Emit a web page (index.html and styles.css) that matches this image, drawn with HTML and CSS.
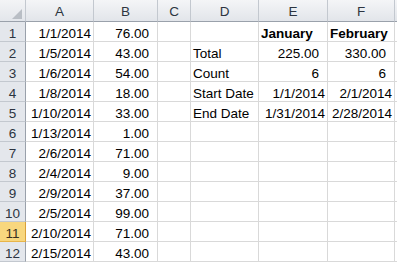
FILE: index.html
```html
<!DOCTYPE html>
<html>
<head>
<meta charset="utf-8">
<link rel="stylesheet" href="styles.css">
</head>
<body>
<div class="sheet">
  <div class="corner"><span class="corner-tri"></span></div>
  <div class="colhead">A</div>
  <div class="colhead">B</div>
  <div class="colhead">C</div>
  <div class="colhead">D</div>
  <div class="colhead">E</div>
  <div class="colhead">F</div>
  <div class="colhead last"></div>

  <div class="rowhead">1</div>
  <div class="cell num">1/1/2014</div><div class="cell amt">76.00</div><div class="cell"></div>
  <div class="cell"></div><div class="cell txt bold">January</div><div class="cell txt bold">February</div><div class="cell last"></div>

  <div class="rowhead">2</div>
  <div class="cell num">1/5/2014</div><div class="cell amt">43.00</div><div class="cell"></div>
  <div class="cell txt">Total</div><div class="cell amt">225.00</div><div class="cell amt">330.00</div><div class="cell last"></div>

  <div class="rowhead">3</div>
  <div class="cell num">1/6/2014</div><div class="cell amt">54.00</div><div class="cell"></div>
  <div class="cell txt">Count</div><div class="cell amt">6</div><div class="cell amt">6</div><div class="cell last"></div>

  <div class="rowhead">4</div>
  <div class="cell num">1/8/2014</div><div class="cell amt">18.00</div><div class="cell"></div>
  <div class="cell txt">Start Date</div><div class="cell num">1/1/2014</div><div class="cell num">2/1/2014</div><div class="cell last"></div>

  <div class="rowhead">5</div>
  <div class="cell num">1/10/2014</div><div class="cell amt">33.00</div><div class="cell"></div>
  <div class="cell txt">End Date</div><div class="cell num">1/31/2014</div><div class="cell num">2/28/2014</div><div class="cell last"></div>

  <div class="rowhead">6</div>
  <div class="cell num">1/13/2014</div><div class="cell amt">1.00</div><div class="cell"></div>
  <div class="cell"></div><div class="cell"></div><div class="cell"></div><div class="cell last"></div>

  <div class="rowhead">7</div>
  <div class="cell num">2/6/2014</div><div class="cell amt">71.00</div><div class="cell"></div>
  <div class="cell"></div><div class="cell"></div><div class="cell"></div><div class="cell last"></div>

  <div class="rowhead">8</div>
  <div class="cell num">2/4/2014</div><div class="cell amt">9.00</div><div class="cell"></div>
  <div class="cell"></div><div class="cell"></div><div class="cell"></div><div class="cell last"></div>

  <div class="rowhead">9</div>
  <div class="cell num">2/9/2014</div><div class="cell amt">37.00</div><div class="cell"></div>
  <div class="cell"></div><div class="cell"></div><div class="cell"></div><div class="cell last"></div>

  <div class="rowhead">10</div>
  <div class="cell num">2/5/2014</div><div class="cell amt">99.00</div><div class="cell"></div>
  <div class="cell"></div><div class="cell"></div><div class="cell"></div><div class="cell last"></div>

  <div class="rowhead active">11</div>
  <div class="cell num">2/10/2014</div><div class="cell amt">71.00</div><div class="cell"></div>
  <div class="cell"></div><div class="cell"></div><div class="cell"></div><div class="cell last"></div>

  <div class="rowhead">12</div>
  <div class="cell num">2/15/2014</div><div class="cell amt">43.00</div><div class="cell"></div>
  <div class="cell"></div><div class="cell"></div><div class="cell"></div><div class="cell last"></div>
</div>
</body>
</html>
```

FILE: styles.css
```css
html, body {
  margin: 0;
  padding: 0;
  background: #ffffff;
}

.sheet {
  display: grid;
  grid-template-columns: 26px 68px 64px 33px 68px 69px 67px 1fr;
  grid-template-rows: 22px repeat(12, 20px);
  width: 397px;
  height: 262px;
  overflow: hidden;
  font-family: "Liberation Sans", Arial, sans-serif;
  font-size: 13.5px;
  color: #000000;
}

/* select-all corner with its small grey triangle */
.corner {
  position: relative;
  box-sizing: border-box;
  border-right: 1px solid #c3c8cf;
  border-bottom: 1px solid #9aa1ab;
  background: linear-gradient(#f3f4f6, #e3e6eb);
}

.corner-tri {
  position: absolute;
  right: 3px;
  bottom: 2px;
  width: 0;
  height: 0;
  border-left: 10px solid transparent;
  border-bottom: 10px solid #b9bec5;
}

.colhead {
  box-sizing: border-box;
  display: flex;
  align-items: center;
  justify-content: center;
  padding-top: 1px;
  border-right: 1px solid #c3c8cf;
  border-bottom: 1px solid #9aa1ab;
  background: linear-gradient(#f4f5f7, #e2e5ea);
  color: #2c3440;
}

.colhead.last {
  border-right: none;
}

.rowhead {
  box-sizing: border-box;
  display: flex;
  align-items: flex-end;
  justify-content: center;
  padding-bottom: 0;
  border-right: 1px solid #9aa1ab;
  border-bottom: 1px solid #c3c8cf;
  background: #e4e7ec;
  color: #2c3440;
}

.rowhead.active {
  background: #f8d77e;
  border-bottom-color: #e8b54a;
  border-right-color: #d9a13a;
  color: #3a3020;
}

.cell {
  box-sizing: border-box;
  display: flex;
  align-items: flex-end;
  padding: 0 2px 0 2px;
  border-right: 1px solid #d9d9d9;
  border-bottom: 1px solid #d9d9d9;
  white-space: nowrap;
  overflow: hidden;
}

.cell.last {
  border-right: none;
}

/* dates: right-aligned, tight to the gridline */
.num {
  justify-content: flex-end;
  padding-right: 2px;
}

/* amounts and counts keep a trailing gap like an accounting format */
.amt {
  justify-content: flex-end;
  padding-right: 8px;
}

.txt {
  justify-content: flex-start;
}

.bold {
  font-weight: bold;
}
```
